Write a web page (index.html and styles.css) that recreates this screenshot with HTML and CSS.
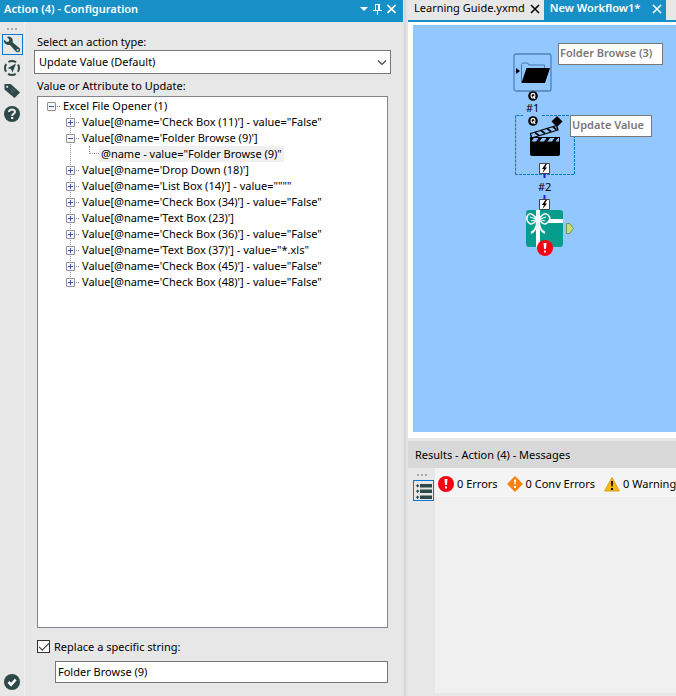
FILE: index.html
```html
<!DOCTYPE html>
<html lang="en">
<head>
<meta charset="utf-8">
<title>Action (4) - Configuration</title>
<link rel="stylesheet" href="styles.css">
</head>
<body>
<main class="app">
  <section class="config">
    <header class="titlebar">
      <h1>Action (4) - Configuration</h1>
      <button class="plain" aria-label="Window menu"><svg width="8" height="12"><path d="M0 4h8L4 8z" fill="#fff"/></svg></button>
      <button class="plain" aria-label="Pin"><svg width="9" height="12"><path d="M2 1.500h5M2.500 1v6M5.500 1v6M6.500 1v6M0 7.500h9M4.500 8v4" stroke="#fff" fill="none"/></svg></button>
      <button class="plain" aria-label="Close"><svg width="9" height="12"><path d="M.5 2l8 8M8.500 2l-8 8" stroke="#fff" stroke-width="1.600" fill="none"/></svg></button>
    </header>
    <div class="config-body">
      <nav class="rail">
        <span class="grip"></span>
        <button class="tool selected" aria-label="Configuration"><svg width="18" height="18" viewBox="0 0 18 18"><path d="M1 3.500L3.600 6 6 5.500 6.300 3.400 3.900 1Q7-.2 9 2.200 10.200 4 9.500 6.200L16.600 12.300Q17.800 14 16.400 15.600 14.500 17 12.800 15.500L6.800 8.700Q3.900 9.500 2 7.500.3 5.600 1 3.500z" fill="#2d4848"/><circle cx="14.600" cy="14" r="1" fill="#e7e7e7"/></svg></button>
        <button class="tool" aria-label="Navigation"><svg width="18" height="18" viewBox="0 0 18 18"><circle cx="9" cy="9" r="7" fill="none" stroke="#2d4848" stroke-width="2" stroke-dasharray="8 3" stroke-dashoffset="4"/><path d="M13 4.500L4.500 9.200 8 10 9.500 13.500z" fill="#2d4848"/></svg></button>
        <button class="tool" aria-label="Annotation"><svg width="18" height="18" viewBox="0 0 18 18"><path d="M1.500 2h6.200L17 10.500 11.500 16 1.500 7.500z" fill="#2d4848"/><circle cx="4.200" cy="4.800" r="1.100" fill="#e7e7e7"/><path d="M7.500 8l3 2.700M9.300 6.500l2.800 2.500" stroke="#637777" stroke-width="1"/></svg></button>
        <button class="tool" aria-label="Help"><svg width="18" height="18" viewBox="0 0 18 18"><circle cx="9" cy="9" r="8" fill="#2d4848"/><path d="M6 7Q6 4.500 9 4.500 12 4.600 12 7 11.800 8.300 10.200 9.100 9.200 9.600 9.200 11" stroke="#e7e7e7" stroke-width="2" fill="none"/><path d="M8 12h2.300v2H8z" fill="#e7e7e7"/></svg></button>
        <button class="tool last" aria-label="Apply"><svg width="18" height="18" viewBox="0 0 18 18"><circle cx="9" cy="9" r="8" fill="#2d4848"/><path d="M5.500 9l2.600 2.800L12.700 6.500" stroke="#fff" stroke-width="2.600" fill="none"/></svg></button>
      </nav>
      <form class="form">
        <label class="caption" for="action-type">Select an action type:</label>
        <div class="select-box">
          <select id="action-type"><option>Update Value (Default)</option></select>
          <svg class="chevron" width="10" height="6"><path d="M1 .5l4 4 4-4" stroke="#444" stroke-width="1.200" fill="none"/></svg>
        </div>
        <p class="caption" id="tree-label">Value or Attribute to Update:</p>
        <div class="tree" aria-labelledby="tree-label">
          <div class="row"><button type="button" class="toggle open" aria-label="Collapse"></button><span>Excel File Opener (1)</span></div>
          <ul class="children">
            <li><div class="row"><button type="button" class="toggle" aria-label="Expand"></button><span>Value[@name='Check Box (11)'] - value="False"</span></div></li>
            <li><div class="row"><button type="button" class="toggle open" aria-label="Collapse"></button><span>Value[@name='Folder Browse (9)']</span></div>
              <div class="row leaf"><i class="elbow"></i><span class="picked">@name - value="Folder Browse (9)"</span></div></li>
            <li><div class="row"><button type="button" class="toggle" aria-label="Expand"></button><span>Value[@name='Drop Down (18)']</span></div></li>
            <li><div class="row"><button type="button" class="toggle" aria-label="Expand"></button><span>Value[@name='List Box (14)'] - value=""""</span></div></li>
            <li><div class="row"><button type="button" class="toggle" aria-label="Expand"></button><span>Value[@name='Check Box (34)'] - value="False"</span></div></li>
            <li><div class="row"><button type="button" class="toggle" aria-label="Expand"></button><span>Value[@name='Text Box (23)']</span></div></li>
            <li><div class="row"><button type="button" class="toggle" aria-label="Expand"></button><span>Value[@name='Check Box (36)'] - value="False"</span></div></li>
            <li><div class="row"><button type="button" class="toggle" aria-label="Expand"></button><span>Value[@name='Text Box (37)'] - value="*.xls"</span></div></li>
            <li><div class="row"><button type="button" class="toggle" aria-label="Expand"></button><span>Value[@name='Check Box (45)'] - value="False"</span></div></li>
            <li><div class="row"><button type="button" class="toggle" aria-label="Expand"></button><span>Value[@name='Check Box (48)'] - value="False"</span></div></li>
          </ul>
        </div>
        <div class="check-line"><input type="checkbox" id="replace" checked><label for="replace">Replace a specific string:</label></div>
        <input class="text" type="text" aria-label="String to replace" value="Folder Browse (9)">
      </form>
    </div>
  </section>
  <div class="splitter"></div>
  <section class="work">
    <div class="tabs">
      <div class="tab"><a href="#guide">Learning Guide.yxmd</a><button class="plain" aria-label="Close Learning Guide"><svg width="10" height="10"><path d="M1 1l8 8M9 1L1 9" stroke="#000" stroke-width="1.600"/></svg></button></div>
      <div class="tab active"><a href="#workflow">New Workflow1*</a><button class="plain" aria-label="Close New Workflow1"><svg width="10" height="10"><path d="M1 1l8 8M9 1L1 9" stroke="#fff" stroke-width="1.600"/></svg></button></div>
    </div>
    <div class="canvas-frame">
      <div class="canvas">
        <svg class="node folder" width="40" height="40"><rect x="1" y="1" width="37" height="37" rx="2" fill="none" stroke="#4f82b5" stroke-width="1.300"/><path d="M3 15l4 3-4 3z"/><path d="M8.500 29V11.500l1-1.500h5l1.500 2h15.500v3" fill="none" stroke="#4779a8"/><path d="M13.500 15H37l-5 15H8.500z"/></svg>
        <svg class="anchor q1" width="10" height="10"><circle cx="5" cy="5" r="4.800"/><ellipse cx="5" cy="4.700" rx="1.900" ry="2.300" fill="none" stroke="#fff" stroke-width="1.100"/><path d="M5 5l2.200 2.800" stroke="#fff" stroke-width="1.200"/></svg>
        <span class="wire-label one">#1</span>
        <svg class="node outline" width="60" height="60"><path d="M.5 59.500V.5H8M27 .5h32.500v59H.5" fill="none" stroke="#0878d0" stroke-width="1.200" stroke-dasharray="3 1"/></svg>
        <svg class="anchor q2" width="10" height="10"><circle cx="5" cy="5" r="4.800"/><ellipse cx="5" cy="4.700" rx="1.900" ry="2.300" fill="none" stroke="#fff" stroke-width="1.100"/><path d="M5 5l2.200 2.800" stroke="#fff" stroke-width="1.200"/></svg>
        <svg class="node clap" width="36" height="42"><path d="M29 0l5.500 5.500L29 11l-5.500-5.500z"/><path d="M2.500 17.500L28.500 9.500l1.500 4.500L3.500 22z" fill="#93c7ff" stroke="#000" stroke-width="1.300" stroke-linejoin="round"/><path d="M7 16.500l4 3M13 14.500l4 3M19 12.500l4 3M25 11l3.500 2.500" stroke="#000" stroke-width="1.600"/><path d="M2 21h30v17q0 2-2 2H4q-2 0-2-2z"/><path d="M3.500 25.500l2.500-3.500h4.500L8 25.500zM11.500 25.500L14 22h4.500L16 25.500zM19.500 25.500L22 22h4.500L24 25.500zM27.500 25.500L30 22h1v3.500z" fill="#93c7ff"/></svg>
        <svg class="node wire" width="12" height="48"><path d="M5.500 11v4M5.500 32v4" stroke="#2020e8" stroke-width="2"/><g fill="#fff" stroke="#444"><path d="M.5.5h10v10H.5zM.5 36.500h10v10H.5z"/></g><path d="M6.500 1L3 6h2L3.500 10 8 4.500H6L8 1zM6.500 37L3 42h2l-1.500 4L8 40.500H6L8 37z"/></svg>
        <span class="wire-label two">#2</span>
        <svg class="node gift" width="48" height="48"><rect x="0" y="0" width="37" height="37" rx="3" fill="#079d8c"/><path d="M10 0h4v37h-4zM22 9h15v4H22z" fill="#fff"/><g stroke="#079d8c" stroke-width="3.500" fill="none"><path d="M10 11Q10 20 4 24M14 11Q14 20 20 24"/></g><g fill="#079d8c" stroke="#fff" stroke-width="1.600"><path d="M11 9.500Q5 1 2 5T3 13Q6 16 11 9.500zM13 9.500Q18 1 22 5T21 13Q18 16 13 9.500z"/><path d="M11 9.500L4 7M11 9.500L5 11M13 9.500L20 7M13 9.500L19 11" stroke-width="1"/><path d="M11 11Q11 20 5 23M13 11Q13 20 19 23" fill="none" stroke-width="2"/></g><circle cx="12" cy="9.500" r="2.500" fill="#fff"/><path d="M40.500 13.500h3l4 5-4 5h-3z" fill="#c6df79" stroke="#6d9551"/><g><circle cx="19" cy="38" r="8" fill="#fb0010"/><path d="M17.500 33h3l-.5 6h-2zM18 40.500h2v2h-2z" fill="#fff"/></g></svg>
        <div class="note browse">Folder Browse (3)</div>
        <div class="note update">Update Value</div>
      </div>
    </div>
    <section class="results">
      <h2>Results - Action (4) - Messages</h2>
      <div class="results-body">
        <nav class="rail">
          <span class="grip"></span>
          <button class="tool selected" aria-label="Messages"><svg width="18" height="18" viewBox="0 0 18 18"><path d="M5 2h12v3.500H5zM5 7.500h12V11H5zM5 13.500h12V17H5z" fill="#2d4848"/><path d="M1 3.700L2.700 2l1.500 1.700-1.500 1.700zM1 9.200l1.700-1.700 1.500 1.700-1.500 1.700zM1 15.200l1.700-1.700 1.500 1.700-1.500 1.700z" fill="#2d4848"/></svg></button>
        </nav>
        <div class="messages">
          <div class="filters">
            <button class="plain"><svg width="16" height="16"><circle cx="8" cy="8" r="8" fill="#fb0010"/><path d="M6.500 3h3L9 9H7zM7 10.500h2v2H7z" fill="#fff"/></svg>0 Errors</button>
            <button class="plain"><svg width="16" height="16"><path d="M8 0l8 8-8 8-8-8z" fill="#f9820f"/><path d="M7 3.500h2l-.4 5H7.400zM7 10h2v2H7z" fill="#fff"/></svg>0 Conv Errors</button>
            <button class="plain"><svg width="16" height="16"><path d="M8 1.500l7.300 13.500H.7z" fill="#fdb913" stroke="#d8a01a" stroke-linejoin="round"/><path d="M7 5h2l-.4 5.500H7.400zM7 12h2v2H7z"/></svg>0 Warning</button>
          </div>
          <div class="output"></div>
        </div>
      </div>
    </section>
  </section>
</main>
</body>
</html>
```

FILE: styles.css
```css
* { box-sizing: border-box; }
body {
  margin: 0;
  background: #e7e7e7;
  color: #000;
  font: 11px/16px "Noto Sans", "Open Sans", sans-serif;
}
h1, h2, p, ul { margin: 0; padding: 0; font: inherit; }
ul { list-style: none; }
button, input, select { font: inherit; color: inherit; }
svg { display: block; flex: none; }
a { color: inherit; text-decoration: none; }
.plain { display: flex; align-items: center; padding: 0; border: 0; background: none; white-space: nowrap; }

.app { display: grid; grid-template-columns: 403fr 5px 268fr; height: 100vh; overflow: hidden; }
.splitter { background: #d8d8d8; border: solid #e3e3e3; border-width: 0 2px 0 1px; }

.config { display: flex; flex-direction: column; min-width: 0; }
.titlebar { display: flex; align-items: center; gap: 5px; height: 22px; padding: 0 7px 4px 4px; background: #1790c7; color: #fff; }
.titlebar h1 { flex: 1; font-weight: 600; }
.config-body { flex: 1; display: flex; min-height: 0; }

.rail { flex: none; display: flex; flex-direction: column; align-items: center; gap: 2px; width: 25px; padding: 6px 0 4px; border-right: 1px solid #f2f2f2; background: #e7e7e7; }
.grip { width: 10px; height: 2px; margin-bottom: 2px; background: repeating-linear-gradient(90deg, #aaa 0 2px, transparent 2px 4px); }
.tool { display: grid; place-items: center; width: 21px; height: 21px; padding: 0; border: 1px solid transparent; background: none; }
.selected { border-color: #0878d7; }
.last { margin-top: auto; }

.form { flex: 1; display: flex; flex-direction: column; min-width: 0; padding: 12px 12px 13px 9px; }
.caption { margin-left: 3px; }
.select-box { position: relative; height: 24px; margin-bottom: 4px; }
.select-box select { width: 100%; height: 100%; padding: 0 4px; border: 1px solid #777; border-radius: 0; background: #fff; appearance: none; }
.chevron { position: absolute; right: 4px; top: 10px; pointer-events: none; }
.tree { flex: 1; margin: 2px 3px 12px; padding: 1px 9px; border: 1px solid #80848f; background: #fff; overflow: hidden; }
.row { display: flex; align-items: center; height: 16px; white-space: nowrap; }
.toggle { position: relative; flex: none; width: 9px; height: 9px; margin-right: 7px; padding: 0; border: 1px solid #919191; border-radius: 1px; background: linear-gradient(#345cb0, #345cb0) center / 5px 1px no-repeat, linear-gradient(#345cb0, #345cb0) center / 1px 5px no-repeat, #f8f8f8; }
.toggle.open { background: linear-gradient(#345cb0, #345cb0) center / 5px 1px no-repeat, #f8f8f8; }
.toggle::after { content: ""; position: absolute; left: 9px; top: 3px; width: 3px; border-top: 1px dotted #888; }
.children { margin-left: 19px; }
.children li { background: repeating-linear-gradient(#999 0 1px, transparent 1px 2px) 4px 0 / 1px 100% no-repeat; }
.children li:last-child { background-size: 1px 8px; }
.leaf { padding-left: 23px; }
.elbow { align-self: flex-start; width: 10px; height: 8px; border: dotted #999; border-width: 0 0 1px 1px; }
.picked { padding: 0 2px; background: #f0f0f0; }
.check-line { display: flex; align-items: center; gap: 4px; height: 13px; margin: 0 3px 8px; }
.check-line input { appearance: none; width: 13px; height: 13px; margin: 0; border: 1px solid #333; background: #fff; display: grid; place-items: center; }
.check-line input:checked::before { content: ""; width: 9px; height: 4px; border: solid #333; border-width: 0 0 1px 1px; transform: translateY(-1px) rotate(-45deg); }
.text { height: 22px; margin: 0 3px 0 21px; padding: 0 2px 2px; border: 1px solid #777; border-radius: 0; background: #fff; }

.work { display: grid; grid-template-rows: 22px 416fr 255fr; min-width: 0; padding-bottom: 3px; }
.tabs { display: flex; border-bottom: 2px solid #1790c7; }
.tab { display: flex; align-items: center; gap: 5px; padding: 0 4px 4px 6px; white-space: nowrap; }
.tab .plain { margin-top: 1px; }
.active { background: #1790c7; color: #fff; font-weight: 600; }
.tab.active { gap: 12px; }
.canvas-frame { display: flex; min-width: 0; padding: 3px 0 6px 5px; background: #fff; }
.canvas { position: relative; flex: 1; overflow: hidden; background: #93c7ff; }
.node, .anchor, .wire-label, .note { position: absolute; }
.folder { left: 100px; top: 28px; }
.q1 { left: 115px; top: 66px; }
.q2 { left: 115px; top: 91px; }
.one { left: 113px; top: 75px; }
.two { left: 125px; top: 154px; }
.outline { left: 102px; top: 90px; }
.clap { left: 115px; top: 91px; }
.wire { left: 126px; top: 138px; }
.gift { left: 113px; top: 185px; }
.note { height: 22px; padding: 1px 1px; border: 1px solid #777; background: #fff; color: #777; font-weight: 600; white-space: nowrap; }
.browse { left: 145px; top: 18px; width: 105px; }
.update { left: 157px; top: 90px; width: 82px; }

.results { display: flex; flex-direction: column; padding-top: 3px; min-width: 0; }
.results h2 { height: 27px; padding: 6px 7px; background: #d8d8d8; }
.results-body { flex: 1; display: flex; }
.results .rail { width: 27px; padding-left: 5px; border-right: 0; align-items: flex-start; }
.results .grip { margin-left: 4px; }
.messages { flex: 1; display: flex; flex-direction: column; min-width: 0; }
.filters { display: flex; align-items: center; gap: 9px; height: 29px; padding: 4px 3px 0; background: #f4f4f4; border-bottom: 1px solid #fafafa; overflow: hidden; }
.filters .plain { gap: 3px; }
.output { flex: 1; background: #f0f0f0; }
```
